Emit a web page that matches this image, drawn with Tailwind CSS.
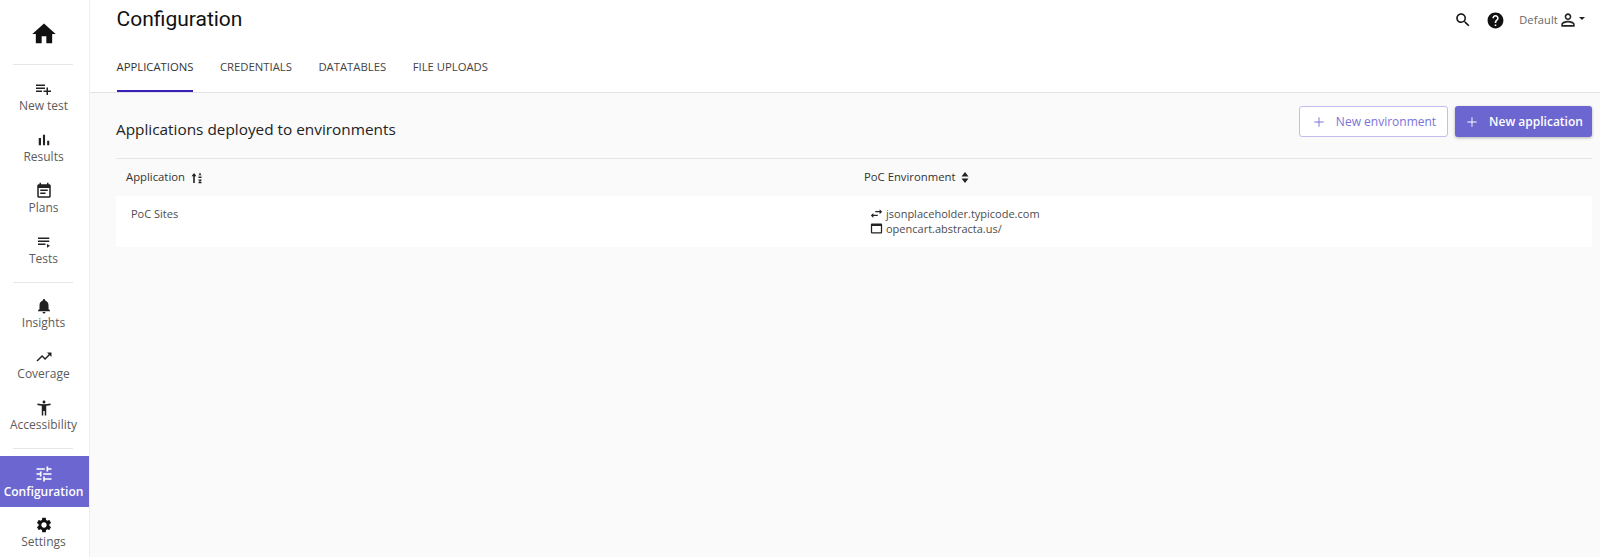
<!doctype html>
<html lang="en">
<head>
<meta charset="utf-8">
<script src="https://cdn.jsdelivr.net/npm/@tailwindcss/browser@4"></script>
</head>
<body class="bg-[#fafafa] font-['Open_Sans',sans-serif] overflow-hidden">
<div class="flex h-[557px] w-[1600px]">
  <nav class="w-[90px] shrink-0 bg-white border-r border-[#eeeeee] flex flex-col text-[12px] leading-[15px] text-[#5c5c5c]">
    <a class="h-[64px] shrink-0 flex items-center justify-center pt-[4px] pr-[2px] text-[#111]"><svg class="w-[28px] h-[28px] fill-current" viewBox="0 0 24 24"><path d="M10 20v-6h4v6h5v-8h3L12 3 2 12h3v8z"/></svg></a>
    <div class="h-px ml-[13px] w-[60px] bg-[#e6e6e6] shrink-0"></div>
    <a class="h-[51px] mt-[15px] shrink-0 flex flex-col items-center pr-[2px]">
      <svg class="w-[19px] h-[18px] fill-[#222]" viewBox="0 0 24 24"><path d="M14 10H2v2h12v-2zm0-4H2v2h12V6zm4 8v-4h-2v4h-4v2h4v4h2v-4h4v-2h-4zM2 16h8v-2H2v2z"/></svg><span>New test</span>
    </a>
    <a class="h-[51px] shrink-0 flex flex-col items-center pr-[2px]"><svg class="w-[18px] h-[18px] fill-[#222]" viewBox="0 0 24 24"><path d="M5 9.2h3V19H5zM10.6 5h2.8v14h-2.8zm5.6 8H19v6h-2.8z"/></svg><span>Results</span></a>
    <a class="h-[51px] shrink-0 flex flex-col items-center pr-[2px]"><svg class="w-[18px] h-[18px] fill-[#222]" viewBox="0 0 24 24"><path d="M17 10H7v2h10v-2zm2-7h-1V1h-2v2H8V1H6v2H5c-1.11 0-1.99.9-1.99 2L3 19c0 1.1.89 2 2 2h14c1.1 0 2-.9 2-2V5c0-1.1-.9-2-2-2zm0 16H5V8h14v11zm-5-5H7v2h7v-2z"/></svg><span>Plans</span></a>
    <a class="h-[51px] shrink-0 flex flex-col items-center pr-[2px]"><svg class="w-[18px] h-[18px] fill-[#222]" viewBox="0 0 24 24"><path d="M19 6H4v2h15V6zm0 4H4v2h15v-2zM4 16h10v-2H4v2zm12-1.500v5l4-2.500-4-2.500z"/></svg><span>Tests</span></a>
    <div class="h-px ml-[13px] w-[60px] bg-[#e6e6e6] shrink-0 mt-[-2px] mb-[14px]"></div>
    <a class="h-[51px] shrink-0 flex flex-col items-center pr-[2px]"><svg class="w-[18px] h-[18px] fill-[#222]" viewBox="0 0 24 24"><path d="M12 22c1.100 0 2-.9 2-2h-4c0 1.100.89 2 2 2zm6-6v-5c0-3.070-1.640-5.640-4.500-6.320V4c0-.83-.67-1.500-1.500-1.500s-1.500.67-1.500 1.500v.68C7.630 5.360 6 7.920 6 11v5l-2 2v1h16v-1l-2-2z"/></svg><span>Insights</span></a>
    <a class="h-[51px] shrink-0 flex flex-col items-center pr-[2px]"><svg class="w-[18px] h-[18px] fill-[#222]" viewBox="0 0 24 24"><path d="M16 6l2.290 2.290-4.880 4.880-4-4L2 16.590 3.410 18l6-6 4 4 6.300-6.290L22 12V6z"/></svg><span>Coverage</span></a>
    <a class="h-[51px] shrink-0 flex flex-col items-center pr-[2px]"><svg class="w-[18px] h-[18px] fill-[#222]" viewBox="0 0 24 24"><path d="M20.500 6c-2.610.7-5.670 1-8.500 1s-5.890-.3-8.500-1L3 8c1.860.5 4 .83 6 1v13h2v-6h2v6h2V9c2-.17 4.140-.5 6-1l-.5-2zM12 6c1.100 0 2-.9 2-2s-.9-2-2-2-2 .9-2 2 .9 2 2 2z"/></svg><span>Accessibility</span></a>
    <div class="h-px ml-[13px] w-[60px] bg-[#e6e6e6] shrink-0 mt-[-2px] mb-[7px]"></div>
    <a class="h-[51px] shrink-0 flex flex-col items-center justify-center pr-[2px] bg-[#6c66d0] text-white font-semibold"><svg class="w-[20px] h-[20px] fill-white" viewBox="0 0 24 24"><path d="M3 17v2h6v-2H3zM3 5v2h10V5H3zm10 16v-2h8v-2h-8v-2h-2v6h2zM7 9v2H3v2h4v2h2V9H7zm14 4v-2H11v2h10zm-6-4h2V7h4V5h-4V3h-2v6z"/></svg><span>Configuration</span></a>
    <a class="h-[51px] shrink-0 flex flex-col items-center pt-[9px] pr-[2px]"><svg class="w-[18px] h-[18px] fill-[#111]" viewBox="0 0 24 24"><path d="M19.140 12.940c.04-.3.06-.61.06-.94 0-.32-.02-.64-.07-.94l2.030-1.580c.18-.14.23-.41.12-.61l-1.920-3.320c-.12-.22-.37-.29-.59-.22l-2.390.96c-.5-.38-1.030-.7-1.620-.94l-.36-2.540c-.04-.24-.24-.41-.48-.41h-3.840c-.24 0-.43.17-.47.41l-.36 2.540c-.59.24-1.130.57-1.620.94l-2.390-.96c-.22-.08-.47 0-.59.22L2.740 8.870c-.12.21-.08.47.12.61l2.030 1.580c-.05.3-.09.63-.09.94s.02.64.07.94l-2.030 1.580c-.18.14-.23.41-.12.61l1.920 3.320c.12.22.37.29.59.22l2.390-.96c.5.38 1.030.7 1.620.94l.36 2.540c.05.24.24.41.48.41h3.840c.24 0 .44-.17.47-.41l.36-2.540c.59-.24 1.130-.56 1.620-.94l2.390.96c.22.08.47 0 .59-.22l1.920-3.320c.12-.22.07-.47-.12-.61l-2.010-1.580zM12 15.600c-1.980 0-3.600-1.620-3.600-3.600s1.620-3.600 3.600-3.600 3.600 1.620 3.600 3.600-1.620 3.600-3.600 3.600z"/></svg><span>Settings</span></a>
  </nav>
  <main class="flex-1 min-w-0 flex flex-col">
    <header class="h-[93px] shrink-0 bg-white border-b border-[#e2e2e2] flex flex-col pl-[26.500px] pr-[15px]">
      <div class="h-[40px] flex items-start justify-between shrink-0">
        <h1 class="font-['Roboto',sans-serif] text-[21px] leading-[38px] text-[#111]">Configuration</h1>
        <div class="flex items-center gap-[14px] h-[40px] text-[#666] text-[11px]">
          <svg class="w-[18px] h-[18px] fill-[#111]" viewBox="0 0 24 24"><path d="M15.500 14h-.79l-.28-.27C15.410 12.590 16 11.110 16 9.500 16 5.910 13.090 3 9.500 3S3 5.910 3 9.500 5.910 16 9.500 16c1.610 0 3.090-.59 4.230-1.570l.27.28v.79l5 4.990L20.490 19l-4.990-5zm-6 0C7.010 14 5 11.990 5 9.500S7.010 5 9.500 5 14 7.010 14 9.500 11.990 14 9.500 14z"/></svg>
          <svg class="w-[19px] h-[19px] fill-[#111]" viewBox="0 0 24 24"><path d="M12 2C6.480 2 2 6.480 2 12s4.480 10 10 10 10-4.480 10-10S17.520 2 12 2zm1 17h-2v-2h2v2zm2.070-7.750l-.9.92C13.450 12.900 13 13.500 13 15h-2v-.5c0-1.100.45-2.100 1.170-2.830l1.240-1.260c.37-.36.59-.86.59-1.410 0-1.100-.9-2-2-2s-2 .9-2 2H8c0-2.210 1.790-4 4-4s4 1.790 4 4c0 .88-.36 1.680-.93 2.250z"/></svg>
          <div class="flex items-center">
            <span class="tracking-[0.2px]">Default</span>
            <svg class="w-[20px] h-[20px] fill-[#222]" viewBox="0 0 24 24"><path d="M12 5.900c1.160 0 2.100.94 2.100 2.100s-.94 2.100-2.100 2.100S9.900 9.160 9.900 8s.94-2.100 2.100-2.100m0 9c2.970 0 6.100 1.460 6.100 2.100v1.100H5.900V17c0-.64 3.130-2.100 6.100-2.100M12 4C9.790 4 8 5.790 8 8s1.790 4 4 4 4-1.790 4-4-1.790-4-4-4zm0 9c-2.670 0-8 1.340-8 4v3h16v-3c0-2.660-5.330-4-8-4z"/></svg>
            <span class="ml-[1px] mb-[4px] w-0 h-0 border-x-[3.500px] border-x-transparent border-t-[3.500px] border-t-[#222]"></span>
          </div>
        </div>
      </div>
      <div class="flex gap-[26.500px] flex-1 text-[11.300px] text-[#444] uppercase">
        <a class="h-full flex items-center border-b-[2px] border-[#3a1fb8] text-[#333] pt-[5px] mb-[-1px]">Applications</a>
        <a class="h-full flex items-center pt-[3px]">Credentials</a>
        <a class="h-full flex items-center pt-[3px]">Datatables</a>
        <a class="h-full flex items-center pt-[3px]">File uploads</a>
      </div>
    </header>
    <section class="pl-[26px] pr-[8px]">
      <div class="h-[66px] flex items-start justify-between border-b border-[#e6e6e6] pt-[13px]">
        <h2 class="text-[15.350px] leading-[22px] mt-[12px] text-[#222]">Applications deployed to environments</h2>
        <div class="flex gap-[7px]">
          <button class="h-[31px] w-[149px] flex items-center justify-center gap-[9px] bg-white rounded-[3px] border border-[#c4bef0] text-[#7a74d8] text-[12px]">
            <svg class="w-[16px] h-[16px] fill-[#7a74d8]" viewBox="0 0 24 24"><path d="M19 12.700h-6.300V19h-1.400v-6.300H5v-1.400h6.300V5h1.400v6.300H19z"/></svg>New environment
          </button>
          <button class="h-[31px] w-[137px] flex items-center justify-center gap-[9px] bg-[#6c66d0] rounded-[3px] shadow-[0_1px_3px_rgba(0,0,0,0.3)] text-white font-semibold text-[12px]">
            <svg class="w-[16px] h-[16px] fill-white" viewBox="0 0 24 24"><path d="M19 12.700h-6.300V19h-1.400v-6.300H5v-1.400h6.300V5h1.400v6.300H19z"/></svg>New application
          </button>
        </div>
      </div>
      <div class="grid grid-cols-[738px_1fr] h-[37px] items-center text-[11.300px] text-[#333]">
        <div class="pl-[10px] flex items-center gap-[6px]">
          <span>Application</span>
          <svg class="w-[13px] h-[14px] fill-[#222]" viewBox="0 0 13 14"><path d="M3 2l2.500 3.200H3.800V12H2.200V5.200H.5zM7.500 4.500L9 1.500l1.500 3H9.600L9 3.400 8.400 4.500zM7.500 8.500h3v1L9 11h1.500v1.300h-3v-1L9 9.800H7.500zM7.500 5.500h3v1.500h-3z"/></svg>
        </div>
        <div class="pl-[10px] flex items-center gap-[6px]">
          <span>PoC Environment</span>
          <svg class="w-[8px] h-[11px] fill-[#222]" viewBox="0 0 8 11"><path d="M4 0l3.500 4.500h-7zM4 11L.5 6.500h7z"/></svg>
        </div>
      </div>
      <div class="grid grid-cols-[738px_1fr] h-[51px] bg-white text-[11px] text-[#4d4d4d]">
        <div class="pl-[15px] pt-[10px] leading-[16px]">PoC Sites</div>
        <div class="pl-[15px] pt-[10px] leading-[15px] flex flex-col">
          <div class="flex items-center gap-[2px]">
            <svg class="w-[15px] h-[15px] fill-[#222]" viewBox="0 0 24 24"><path d="M6.990 11L3 15l3.990 4v-3H14v-2H6.990v-3zM21 9l-3.990-4v3H10v2h7.010v3L21 9z"/></svg><span>jsonplaceholder.typicode.com</span>
          </div>
          <div class="flex items-center gap-[2px]">
            <svg class="w-[15px] h-[15px] fill-[#222]" viewBox="0 0 24 24"><path d="M19 4H5c-1.110 0-2 .9-2 2v12c0 1.100.89 2 2 2h14c1.100 0 2-.9 2-2V6c0-1.100-.89-2-2-2zm0 14H5V8h14v10z"/></svg><span>opencart.abstracta.us/</span>
          </div>
        </div>
      </div>
    </section>
  </main>
</div>
</body>
</html>
